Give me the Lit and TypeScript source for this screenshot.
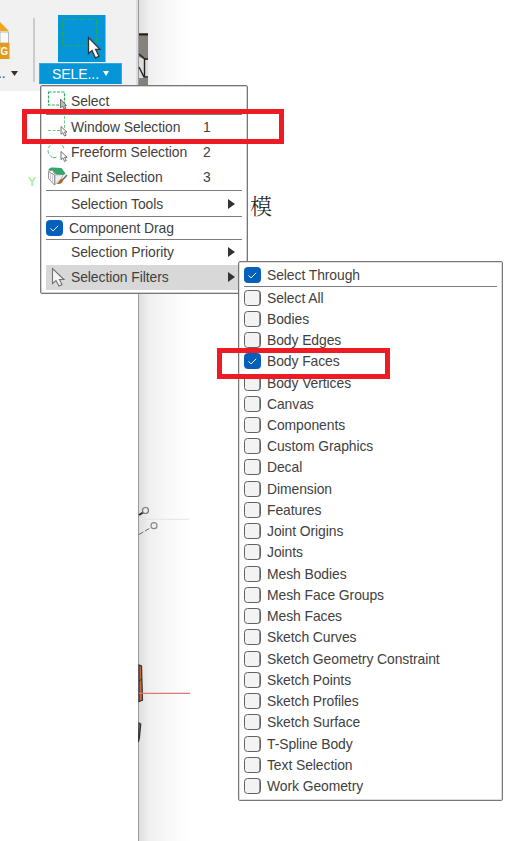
import { LitElement, html, css, svg } from "lit";
import { customElement, property } from "lit/decorators.js";
import { classMap } from "lit/directives/class-map.js";

@customElement("check-mark")
class CheckMark extends LitElement {
  @property({ type: Boolean }) on = false;
  static styles = css`
    :host { display: block; flex: none; width: 17px; height: 16px; }
    .box {
      box-sizing: border-box; width: 17px; height: 16px; border-radius: 3.5px;
      background: #f3f3f3; border: 1px solid #626262;
      box-shadow: inset -0.7px 0 0 #626262;
    }
    .on { background: #0560bc; border-color: #0560bc; box-shadow: none; }
    svg { display: block; margin: -1px; }
  `;
  render() {
    return html`<div class=${classMap({ box: true, on: this.on })}>
      ${this.on
        ? html`<svg width="17" height="16"><path d="M4.5 8.4 L7 10.9 L12.2 5.8" fill="none" stroke="#fff" stroke-width="1" /></svg>`
        : null}
    </div>`;
  }
}

const cursor = (x: number, y: number, s: number) => svg`
  <path transform="translate(${x} ${y}) scale(${s})" d="M0 0 V13.5 L3.2 10.6 L6 16.5 L8.8 15.2 L6 9.6 H10.2 Z"
    fill="#fff" stroke="#484848" stroke-width="1.3" stroke-linejoin="round" />`;

const icons: Record<string, unknown> = {
  select: svg`<rect x="1.5" y="2" width="16" height="13" fill="none" stroke="#27ae57" stroke-width="1.2" stroke-dasharray="3 1.3" />
    <path d="M13.5 9 V18 L15.5 16 L17 19 L19 18.5 L17.8 15.5 H19.5 Z" fill="#b9b9b9" stroke="#666" stroke-width=".9" />`,
  window: svg`<path d="M17.5 0 V13 M1 14.5 H13" fill="none" stroke="#6cca91" stroke-dasharray="3 1.5" />${cursor(14, 10.5, 0.58)}`,
  freeform: svg`<path d="M5.5 16.5 C-1 13 0 5 6 2.7 C12 0 17 4 17 8.5 M6 16.8 L11 16" fill="none" stroke="#4dbb7b" stroke-dasharray="3.5 2" />${cursor(14, 10.5, 0.6)}`,
  paint: svg`<path d="M1.5 5.5 L7.5 9 V19 L1.5 12.5 Z" fill="#f7f7f7" stroke="#888" stroke-width=".9" />
    <path d="M3.5 7 V14.5 M5.5 8 V17" stroke="#bbb" stroke-width=".7" />
    <path d="M8 9 L16 8.5 L15 12 L8 18.5 Z" fill="#eee" stroke="#999" stroke-width=".7" />
    <path d="M1 4.5 C2 2 4 1.5 6 1.5 L14.5 2 L18.5 7.5 L17 9 L9 8.5 L5.5 4 Z" fill="#35a56b" />
    <path d="M2 5 L5.5 4 L8 8.5" stroke="#777" stroke-width=".8" fill="none" />
    <path d="M20 9 L15.5 14" stroke="#737373" stroke-width="1.8" />
    <path d="M16 13.5 C16 17.5 13 18.5 9.5 17.8 C12.5 16.5 12 14.5 14.5 12.8 Z" fill="#a96625" />`,
  arrow: svg`<path d="M5.5 2.5 V17.5 L9 14.5 L12 20 L15 18.7 L12.5 13.5 H17 Z" fill="#f4f4f4" stroke="#727272" stroke-width="1.1" />`,
};

@customElement("select-menu")
class SelectMenu extends LitElement {
  static styles = css`
    :host {
      display: flex; flex-direction: column; box-sizing: border-box; width: 208px; height: 209px;
      padding: 3px 5px 0; background: #fff; border: 1px solid #777; border-radius: 2px;
      box-shadow: inset 0 0 0 1px #d2d2d2;
    }
    .row { display: flex; align-items: center; box-sizing: border-box; height: 25px; padding-bottom: 1px; white-space: nowrap; flex: none; }
    .icon { width: 22px; height: 22px; margin-left: 1px; flex: none; }
    .label { margin-left: 2px; width: 132px; }
    .line { height: 1px; width: 196px; background: #7d7d7d; flex: none; }
    .tools { padding-bottom: 0; }
    .drag { height: 22px; padding: 0; }
    .drag .label { margin-left: 6px; }
    .hot { background: #d8d8d8; }
    .tri { margin-left: 25px; width: 0; border-left: 7px solid #333; border-top: 5.5px solid transparent; border-bottom: 5.5px solid transparent; }
  `;
  row(cls: string, icon: string, label: string, key = "", sub = false) {
    return html`<div class="row ${cls}"><svg class="icon" viewBox="0 0 22 22">${icons[icon]}</svg>
      <span class="label">${label}</span>${key}${sub ? html`<span class="tri"></span>` : null}</div>`;
  }
  render() {
    const line = html`<div class="line"></div>`;
    return html`
      ${this.row("", "select", "Select")}${line}
      ${this.row("", "window", "Window Selection", "1")}
      ${this.row("", "freeform", "Freeform Selection", "2")}
      ${this.row("", "paint", "Paint Selection", "3")}${line}
      ${this.row("tools", "", "Selection Tools", "", true)}${line}
      <div class="row drag"><check-mark on></check-mark><span class="label">Component Drag</span></div>${line}
      ${this.row("", "", "Selection Priority", "", true)}
      ${this.row("hot", "arrow", "Selection Filters", "", true)}`;
  }
}

const filters = [
  "Select All", "Bodies", "Body Edges", "Body Faces", "Body Vertices", "Canvas", "Components",
  "Custom Graphics", "Decal", "Dimension", "Features", "Joint Origins", "Joints", "Mesh Bodies",
  "Mesh Face Groups", "Mesh Faces", "Sketch Curves", "Sketch Geometry Constraint", "Sketch Points",
  "Sketch Profiles", "Sketch Surface", "T-Spline Body", "Text Selection", "Work Geometry",
];

@customElement("filter-menu")
class FilterMenu extends LitElement {
  static styles = css`
    :host {
      display: flex; flex-direction: column; box-sizing: border-box; width: 265px; height: 540px;
      padding: 2px 5px 0; background: #fff; border: 1px solid #777; border-radius: 2px;
      box-shadow: inset 0 0 0 1px #ddd;
    }
    .row { display: flex; align-items: center; gap: 6px; height: 21.24px; flex: none; white-space: nowrap; }
    .top { height: 22px; }
    .line { height: 1px; width: 253px; background: #7d7d7d; flex: none; }
  `;
  render() {
    return html`<div class="row top"><check-mark on></check-mark>Select Through</div><div class="line"></div>
      ${filters.map((f) => html`<div class="row"><check-mark ?on=${f === "Body Faces"}></check-mark>${f}</div>`)}`;
  }
}

@customElement("app-root")
class AppRoot extends LitElement {
  static styles = css`
    :host {
      display: block; position: relative; width: 527px; height: 841px; overflow: hidden; background: #fff;
      font: 13.9px "Liberation Sans", Arial, sans-serif; letter-spacing: -0.07px; color: #414141;
    }
    .page { display: grid; grid-template-columns: 139px 1fr; height: 841px; }
    .panel { border-right: 1px solid #999; background: #fff; }
    .canvas { background: linear-gradient(to right, #dedede 0, #efefef 10px, #f8f8f8 28px, #fff 54px); }
    .bar { display: flex; box-sizing: border-box; height: 91px; background: #f1f1f1; border-right: 2px solid #ddd; }
    .export { width: 33px; }
    .export svg { display: block; }
    .rule { width: 2px; height: 64px; margin-top: 18px; background: #ccc; }
    .tool { margin: 15px 0 0 4px; width: 83px; }
    .tile { display: block; margin-left: 19px; }
    .caption {
      display: flex; align-items: center; gap: 4px; box-sizing: border-box; width: 83px; height: 21px; margin-top: 1px;
      padding-left: 12px; background: #0696d7; border: 1px solid #35aae0; border-bottom-color: #0696d7; color: #fff; font-size: 14px;
    }
    .down { border-top: 5px solid #fff; border-left: 3.5px solid transparent; border-right: 3.5px solid transparent; }
    .scene, .menu, .sub, .mark, .han, .axis { position: absolute; }
    .scene { left: 0; top: 0; }
    .menu { left: 40px; top: 85px; }
    .sub { left: 238px; top: 261px; }
    .mark { box-sizing: border-box; border: 5px solid #ed1c24; }
    .m1 { left: 22px; top: 109px; width: 262px; height: 35px; }
    .m2 { left: 217px; top: 348px; width: 173px; height: 31px; }
    .han { left: 250px; top: 189px; font: 22px/32px "Noto Serif CJK SC", "Noto Sans CJK SC", serif; font-weight: 300; color: #222; }
    .axis { left: 28px; top: 175px; font-weight: bold; font-size: 12px; color: #a5f3a5; }
  `;
  render() {
    return html`
      <div class="page">
        <div class="panel">
          <div class="bar">
            <div class="export">
              <svg width="33" height="82">
                <path d="M0 22 L9 31 H0 Z" fill="#f2a61c" />
                <path d="M0 32 H8.5 V43 H0 Z" fill="#fafafa" stroke="#aaa" stroke-width=".8" />
                <rect x="-2" y="43" width="11.5" height="16" fill="#e49a1b" />
                <text x="-6" y="55" font-size="11" font-weight="bold" fill="#fff" textLength="14" lengthAdjust="spacingAndGlyphs">VG</text>
                <text x="-2" y="78" font-size="14" fill="#444">..</text>
                <path d="M11 71 H18 L14.5 76 Z" fill="#333" />
              </svg>
            </div>
            <div class="rule"></div>
            <div class="tool">
              <svg class="tile" width="48" height="47">
                <rect width="47.5" height="47" fill="#0696d7" />
                <rect x="4.5" y="4.5" width="34" height="26" fill="none" stroke="#20ad61" stroke-dasharray="6 2.5" />
                <path d="M30.5 22.5 V38.5 L34 35.5 L37.5 43 L41 41.2 L37.6 34.3 H42 Z" fill="#fff" stroke="#333" stroke-width="1.3" />
              </svg>
              <div class="caption">SELE...<span class="down"></span></div>
            </div>
          </div>
        </div>
        <div class="canvas"></div>
      </div>
      <svg class="scene" width="527" height="841">
        <rect x="139" y="33" width="9" height="52" fill="#85827b" />
        <path d="M139 34.5 H148" stroke="#222" stroke-width="2" />
        <path d="M139 57 L146 60 H148 V78 H139 Z" fill="#ddd" />
        <path d="M139 54 L145 59 H148 M144.5 59 V77 M139 67 L144 77 H148" fill="none" stroke="#222" stroke-width="1.4" />
        <path d="M139 515 L143 512.5" stroke="#222" stroke-width="2" />
        <circle cx="145.5" cy="510.5" r="3" fill="#eee" stroke="#777" stroke-width="1.2" />
        <path d="M139 534.5 L151 527.5" stroke="#666" stroke-dasharray="5 2" />
        <circle cx="154" cy="525.7" r="3" fill="#eee" stroke="#888" stroke-width="1.2" />
        <path d="M139 519.3 H189" stroke="#e4e4e4" />
        <path d="M139 665 L141.5 666 L142.5 700 L139 701.5 Z" fill="#c9673b" stroke="#333" stroke-width="1.2" />
        <path d="M139 681 L142 679" stroke="#333" />
        <path d="M139 723 L140.8 724 L139.4 738 L138.5 742 Z" fill="#c9673b" stroke="#333" stroke-width="1.1" />
        <path d="M139 693.3 H190" stroke="#df7777" stroke-width="1.2" />
      </svg>
      <span class="axis">Y</span>
      <span class="han">模</span>
      <select-menu class="menu"></select-menu>
      <filter-menu class="sub"></filter-menu>
      <div class="mark m1"></div>
      <div class="mark m2"></div>`;
  }
}
